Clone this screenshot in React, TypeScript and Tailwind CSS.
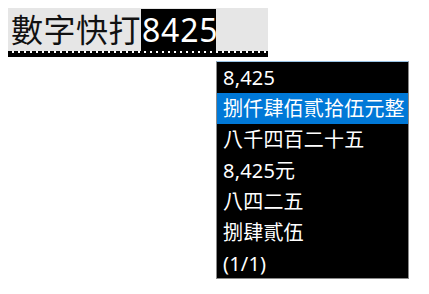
const candidates = [
  "8,425",
  "捌仟肆佰貳拾伍元整",
  "八千四百二十五",
  "8,425元",
  "八四二五",
  "捌肆貳伍",
  "(1/1)",
]

const fontStack = { fontFamily: '"Noto Sans", "Noto Sans CJK TC", sans-serif' }

export default function App() {
  return (
    <div className="w-[429px] h-[294px] bg-white relative overflow-hidden" style={fontStack}>
      {/* 輸入框 */}
      <div className="pt-[8px] pl-[8px]">
        <div className="w-[260px] h-[43px] bg-[#e6e6e6] flex items-end pl-[3px] pt-[1px]">
          <span className="text-[32px] leading-[42px] text-[#111] tracking-[0.5px]">數字快打</span>
          <span className="text-[32px] leading-[42px] bg-black text-white w-[75px] tracking-[0.8px] pl-[1px]">8425</span>
        </div>
        <div className="w-[260px] h-[2px] bg-[repeating-linear-gradient(90deg,#000_0_4px,#fff_4px_6px)]" />
        <div className="w-[260px] h-[4px] bg-black" />
      </div>

      {/* 候選清單 */}
      <div className="absolute left-[216px] top-[61px] w-[193px] h-[218px] bg-black border border-[#8a8a8a] border-t-[#9ac4e6]">
        {candidates.map((c, i) => (
          <div
            key={c}
            className={
              i === 1
                ? "h-[31px] bg-[#0078d7] text-white text-[20px] leading-[31px] pl-[6px] whitespace-nowrap tracking-[0.2px]"
                : "h-[31px] text-white text-[20px] leading-[31px] pl-[6px] whitespace-nowrap tracking-[0.2px]"
            }
          >
            {c}
          </div>
        ))}
      </div>
    </div>
  )
}
